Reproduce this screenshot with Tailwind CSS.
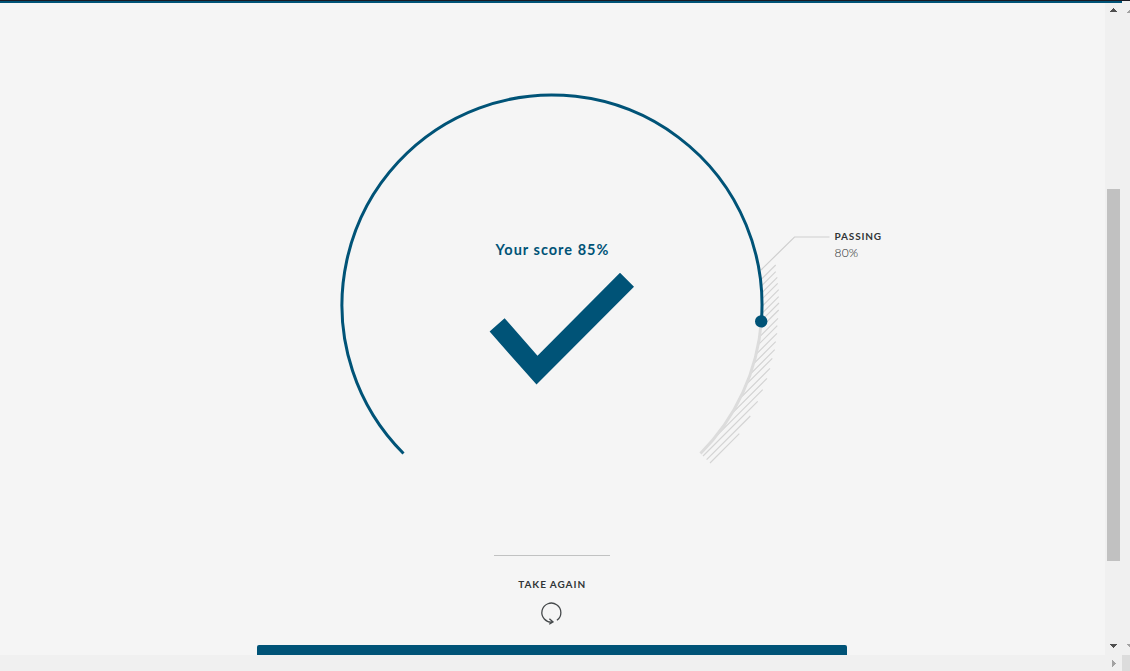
<!DOCTYPE html>
<html lang="en">
<head>
<meta charset="utf-8">
<title>Quiz results</title>
<script src="https://cdn.jsdelivr.net/npm/@tailwindcss/browser@4"></script>
</head>
<body class="h-[671px] w-[1130px] overflow-hidden bg-[#f5f5f5] font-['Lato',sans-serif]">
<div class="flex h-full flex-col">
  <div class="h-px shrink-0 bg-[#1c1b24]"></div>
  <div class="flex min-h-0 flex-1">
    <div class="flex w-[1105px] flex-col">
      <div class="h-[2px] shrink-0 bg-[#005377]"></div>
      <main class="flex flex-1 flex-col items-center pr-px">
        <section class="relative h-[552px] w-full">
          <svg class="absolute inset-0" width="1105" height="552" viewBox="0 3 1105 552" fill="none">
            <defs><clipPath id="outside"><path clip-rule="evenodd" d="M0 0H1105V555H0ZM342 305a210 210 0 1 0 420 0a210 210 0 1 0-420 0Z"/></clipPath></defs>
            <path clip-path="url(#outside)" stroke="#d4d4d4" stroke-width="1.2" d="M644 396.7L775.7 265M647 400.4L775.7 271.7M651 403.6L777.3 277.3M654 407L777.7 283.3M658 410.4L778.7 289.7M661 414.4L778.7 296.7M665 417L779 303M668 420.7L778.7 310M672 424.3L778 318.3M675 428L777.3 325.7M679 431.3L777 333.3M682 435.4L775.7 341.7M686 438.4L774.7 349.7M689 441.6L772.3 358.3M693 445.3L770 368.3M696 449.3L767 378.3M700.5 451.9L762.7 389.7"/>
            <path stroke="#d4d4d4" stroke-width="1.2" d="M703 456L757.7 401.3M706.6 459.7L750.3 416M710 463L739.3 433.7"/>
            <path d="M761 270L794.5 237H829.5" stroke="#cfcfcf" stroke-width="1.2"/>
            <path d="M761.4 321A210 210 0 0 1 700.5 453.5" stroke="#dcdcdc" stroke-width="3"/>
            <path d="M403.5 453.5A210 210 0 1 1 761.4 321" stroke="#005377" stroke-width="3"/>
            <circle cx="761.2" cy="321.4" r="6.2" fill="#005377"/>
            <path d="M489.6 331.6L504.6 318.2L537.5 355.8L620 272.8L634 286.8L536.5 384.6Z" fill="#005377"/>
          </svg>
          <h1 class="absolute left-[495.5px] top-[237px] whitespace-nowrap text-[14.5px] leading-5 font-bold tracking-[1.02px] text-[#005377]">Your score 85%</h1>
          <div class="absolute left-[834.5px] top-[225px] whitespace-nowrap">
            <div class="text-[10px] leading-4 font-bold tracking-[0.85px] text-[#313537]">PASSING</div>
            <div class="mt-px text-[12px] leading-4 font-light tracking-[0.2px] text-[#222526]">80%</div>
          </div>
        </section>
        <div class="h-px w-[116px] shrink-0 bg-[#c1c2c2]"></div>
        <button class="mt-5 flex flex-col items-center">
          <span class="pl-[0.3px] text-[10px] leading-4 font-bold tracking-[0.93px] text-[#313537]">TAKE AGAIN</span>
          <svg class="mt-2" width="24" height="26" viewBox="0 0 24 26" fill="none" stroke="#45494b" stroke-width="1.3"><path d="M16.9 20.3A9.5 9.5 0 1 0 12.6 22M9.4 18.8L13 22L9.2 24.2"/></svg>
        </button>
        <div class="mt-auto h-[10px] w-[590px] rounded-t-[2px] bg-[#005377]"></div>
      </main>
      <div class="h-4 shrink-0 bg-[#f0f0f0]"></div>
    </div>
    <aside class="flex w-[17px] flex-col items-center bg-[#f0f0f0]">
      <div class="h-[2px] w-full bg-[#005377]"></div>
      <svg class="mt-[5px]" width="7" height="4" shape-rendering="crispEdges" fill="#505050"><path d="M3 0h1v1h1v1h1v1h1v1H0V3h1V2h1V1h1z"/></svg>
      <div class="mt-[177px] h-[372px] w-[13px] bg-[#c1c1c1]"></div>
      <svg class="mt-[83px]" width="7" height="4" shape-rendering="crispEdges" fill="#505050"><path d="M0 0h7v1H6v1H5v1H4v1H3V3H2V2H1V1H0z"/></svg>
      <svg class="mt-3" width="4" height="7" shape-rendering="crispEdges" fill="#a3a3a3"><path d="M0 0h1v1h1v1h1v1h1v1H3v1H2v1H1v1H0z"/></svg>
    </aside>
    <aside class="flex w-2 flex-col items-end bg-[#f0f0f0]">
      <svg class="mt-[8px]" width="3" height="4" shape-rendering="crispEdges" fill="#a3a3a3"><path d="M3 0v4H0V3h1V2h1V1h1z"/></svg>
      <svg class="mt-[631px]" width="3" height="4" shape-rendering="crispEdges" fill="#a3a3a3"><path d="M0 0h3v3H2V2H1V1H0z"/></svg>
      <div class="mt-auto h-4 w-full bg-[#dcdcdc]"></div>
    </aside>
  </div>
</div>
</body>
</html>
